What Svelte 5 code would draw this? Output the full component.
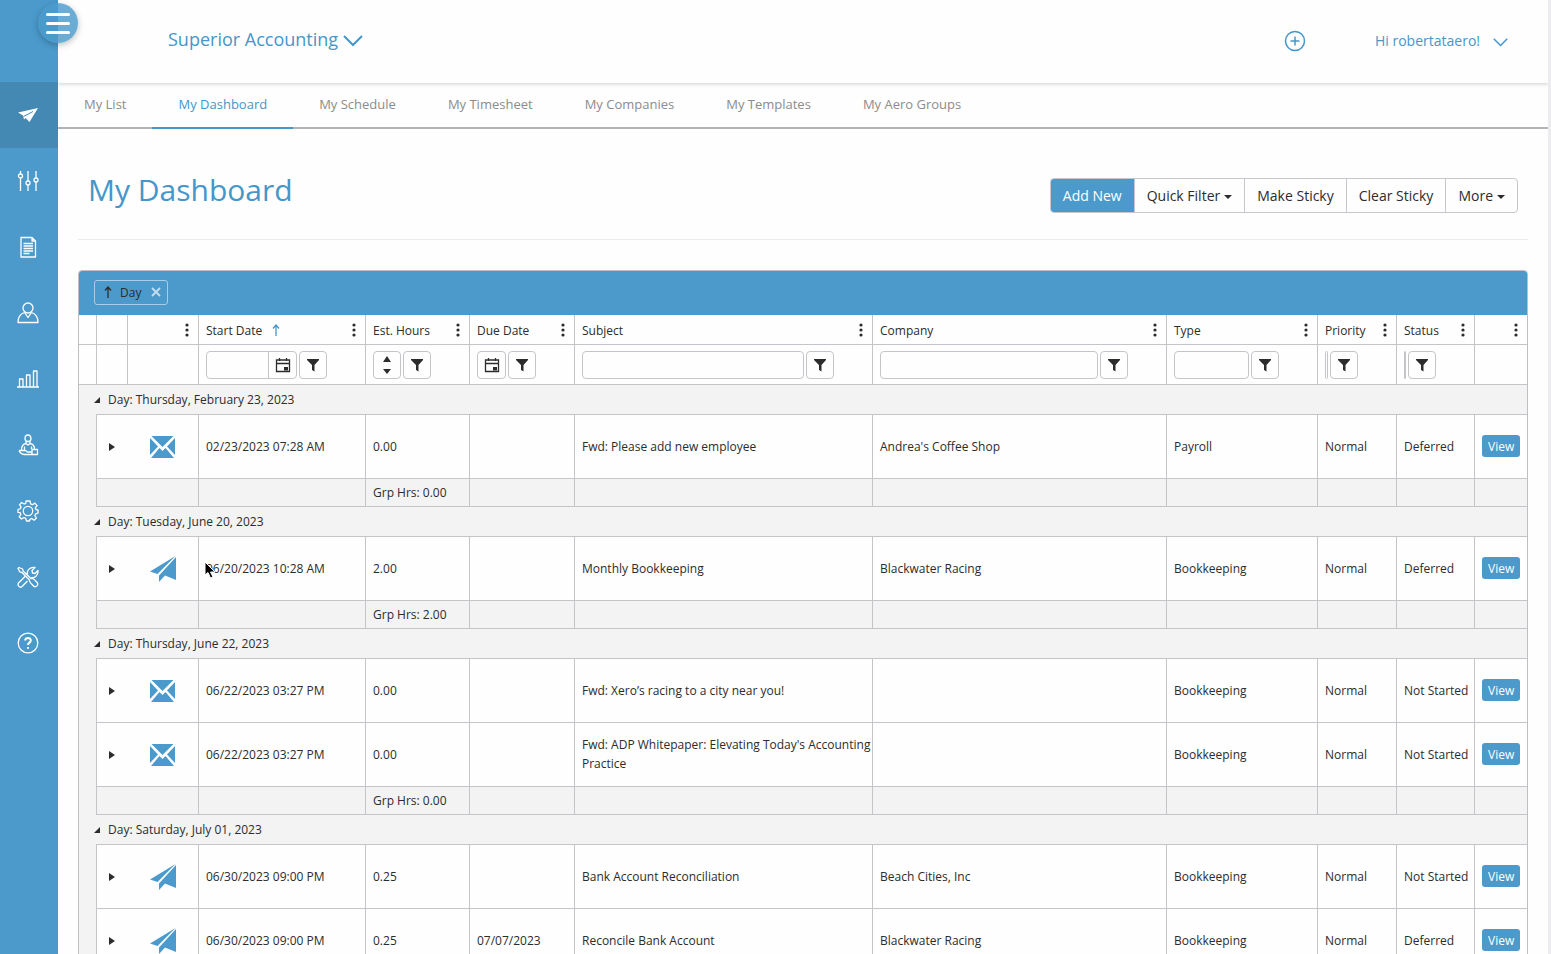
<script lang="ts">
  const navItems = ['send', 'sliders', 'document', 'user', 'chart', 'client', 'gear', 'tools', 'help'];
  const tabs = ['My List', 'My Dashboard', 'My Schedule', 'My Timesheet', 'My Companies', 'My Templates', 'My Aero Groups'];

  const columns = [
    { label: 'Start Date', filter: 'date', sorted: true },
    { label: 'Est. Hours', filter: 'number' },
    { label: 'Due Date', filter: 'date' },
    { label: 'Subject', filter: 'text' },
    { label: 'Company', filter: 'text' },
    { label: 'Type', filter: 'text' },
    { label: 'Priority', filter: 'text' },
    { label: 'Status', filter: 'text' }
  ];

  const groups = [
    {
      day: 'Thursday, February 23, 2023',
      hours: '0.00',
      rows: [
        { icon: 'mail', cells: ['02/23/2023 07:28 AM', '0.00', '', 'Fwd: Please add new employee', "Andrea's Coffee Shop", 'Payroll', 'Normal', 'Deferred'] }
      ]
    },
    {
      day: 'Tuesday, June 20, 2023',
      hours: '2.00',
      rows: [
        { icon: 'plane', pointer: true, cells: ['06/20/2023 10:28 AM', '2.00', '', 'Monthly Bookkeeping', 'Blackwater Racing', 'Bookkeeping', 'Normal', 'Deferred'] }
      ]
    },
    {
      day: 'Thursday, June 22, 2023',
      hours: '0.00',
      rows: [
        { icon: 'mail', cells: ['06/22/2023 03:27 PM', '0.00', '', 'Fwd: Xero’s racing to a city near you!', '', 'Bookkeeping', 'Normal', 'Not Started'] },
        { icon: 'mail', cells: ['06/22/2023 03:27 PM', '0.00', '', "Fwd: ADP Whitepaper: Elevating Today's Accounting Practice", '', 'Bookkeeping', 'Normal', 'Not Started'] }
      ]
    },
    {
      day: 'Saturday, July 01, 2023',
      rows: [
        { icon: 'plane', cells: ['06/30/2023 09:00 PM', '0.25', '', 'Bank Account Reconciliation', 'Beach Cities, Inc', 'Bookkeeping', 'Normal', 'Not Started'] },
        { icon: 'plane', cells: ['06/30/2023 09:00 PM', '0.25', '07/07/2023', 'Reconcile Bank Account', 'Blackwater Racing', 'Bookkeeping', 'Normal', 'Deferred'] }
      ]
    }
  ];

  let activeNav = $state('send');
  let activeTab = $state('My Dashboard');
</script>

{#snippet dots()}
  <button class="dots" aria-label="Column menu">
    <svg width="4" height="14" viewBox="0 0 4 14"><circle cx="2" cy="2" r="1.6" /><circle cx="2" cy="7" r="1.6" /><circle cx="2" cy="12" r="1.6" /></svg>
  </button>
{/snippet}

{#snippet chevron(size: number)}
  <svg class="chevron" width={size} height={size} viewBox="0 0 20 20"><path d="M1 5l9 9 9-9" /></svg>
{/snippet}

<div class="shell">
  <aside class="sidebar">
    <nav aria-label="Main">
      {#each navItems as item}
        <button class="nav-item" class:active={item === activeNav} aria-label={item} onclick={() => (activeNav = item)}>
          <svg width="22" height="22" viewBox="0 0 22 22">
            {#if item === 'send'}
              <path class="solid" d="M1 8.500 21 4l-8.500 14-4-4-1.500 1.500-1-4z" />
              <path class="fold" d="M6.500 12.500 16 7.500" />
            {:else if item === 'sliders'}
              <path d="M3.500 1v3M3.500 8v13M11 1v10M11 15v6M19 1v7M19 12v9" />
              <circle cx="3.500" cy="6" r="2" /><circle cx="11" cy="13" r="2" /><circle cx="19" cy="10" r="2" />
            {:else if item === 'document'}
              <path d="M4 1.500h11l3.500 3.500v16H4zM15 1.500V5h3.500M6.500 7.500h9.500M6.500 10h9.500M6.500 12.500h9.500M6.500 15h9.500M6.500 17.500h6" />
            {:else if item === 'user'}
              <circle cx="11" cy="6" r="5" />
              <path d="M7.500 10.500C3 12 1 14.500 1 20.500h20c0-6-2-8.500-6.500-10M7.500 10.500 11 15.500l3.500-5" />
            {:else if item === 'chart'}
              <path d="M0 19h22M2.500 19v-8h3.500v8M9.500 19V7h3.500v12M16.500 19V3h3.500v16" />
            {:else if item === 'client'}
              <path d="M8 4.500a3 3.500 0 0 1 6 0c0 4-6 4-6 0zM9 7.500v2l2 1.500 2-1.500v-2M9 9.500c-3 .5-4.500 2-4.500 6.500M13 9.500c3 .5 4.500 2 4.500 5.500M7.500 12.500V16M14.500 12.500V15M2 16.500h6.500l2 1.500h4.500M2 16.500c1 2.500 3 4 6 4h7M15 15.500h5.500v5H15z" />
            {:else if item === 'gear'}
              <circle cx="11" cy="11" r="4.700" />
              <path d="M9 1h4l.6 2.900 1.800.8 2.500-1.600 2.200 2.500-1.800 2.300.7 1.700 2 .4v3.200l-2.300.6-.8 1.800 1.500 2.400-2.300 2.200-2.400-1.700-1.700.8L12.500 21h-3l-.8-2.700-1.800-.8-2.400 1.500-2.300-2.200 1.600-2.500-.7-1.700L1 12.400V9.500l2.300-.8.800-1.800L2.500 4.700l2.200-2.200 2.500 1.500 1.600-.7z" />
            {:else if item === 'tools'}
              <path d="M2 1.500 5.500 3l.8 2.200L14 12.500c2-.5 3 .5 6.500 4.500 1 2-1.500 4.500-3.500 3.500-3.500-3.500-5-4.500-4.500-6.500L4.800 6.300 2.700 5.800 1 2.500zM10.500 8.500c-1-4 2.500-8 7.500-7l-3 3 .5 2.500 2.500.5 3-3c.5 5-3.500 8-7 7M8 10.500 1.500 17c-1.500 2 1 5 3 4l6-6" />
            {:else}
              <circle cx="11" cy="11" r="9.800" />
              <path class="bold" d="M8.200 8.500c0-3.500 5.600-3.500 5.600 0 0 2.200-2.800 2-2.800 4.500M11 15v1.800" />
            {/if}
          </svg>
        </button>
      {/each}
    </nav>
    <button class="menu-toggle" aria-label="Toggle menu"><span></span><span></span><span></span></button>
  </aside>

  <div class="page">
    <header>
      <button class="company">Superior Accounting {@render chevron(20)}</button>
      <div class="account">
        <button class="add" aria-label="Add">
          <svg width="22" height="22" viewBox="0 0 22 22"><circle cx="11" cy="11" r="9.500" /><path d="M6.500 11h9M11 6.500v9" /></svg>
        </button>
        <button class="user">Hi robertataero! {@render chevron(15)}</button>
      </div>
    </header>

    <nav class="tabs" aria-label="Sections">
      {#each tabs as tab}
        <a href="#{tab.replaceAll(' ', '-')}" class:active={tab === activeTab} onclick={() => (activeTab = tab)}>{tab}</a>
      {/each}
    </nav>

    <main>
      <div class="title-row">
        <h1>My Dashboard</h1>
        <div class="btn-group">
          <button class="primary">Add New</button>
          <button>Quick Filter<i class="caret"></i></button>
          <button>Make Sticky</button>
          <button>Clear Sticky</button>
          <button>More<i class="caret"></i></button>
        </div>
      </div>

      <div class="grid">
        <div class="grouping">
          <span class="chip">
            <svg width="8" height="12" viewBox="0 0 8 12"><path d="M4 12V1M1 4.500 4 1l3 3.500" /></svg>
            Day
            <button aria-label="Remove grouping">
              <svg width="10" height="10" viewBox="0 0 10 10"><path d="M1 1l8 8M9 1L1 9" /></svg>
            </button>
          </span>
        </div>
        <table>
          <colgroup>
            <col class="c-group" /><col class="c-expand" /><col class="c-icon" /><col class="c-start" />
            <col class="c-hours" /><col class="c-due" /><col class="c-subject" /><col /><col class="c-type" />
            <col class="c-priority" /><col class="c-status" /><col class="c-view" />
          </colgroup>
          <thead>
            <tr class="labels">
              <th></th>
              <th></th>
              <th><div class="th">{@render dots()}</div></th>
              {#each columns as column}
                <th>
                  <div class="th">
                    {column.label}
                    {#if column.sorted}
                      <svg class="sort" width="8" height="12" viewBox="0 0 8 12"><path d="M4 12V1M1 4.500 4 1l3 3.500" /></svg>
                    {/if}
                    {@render dots()}
                  </div>
                </th>
              {/each}
              <th><div class="th">{@render dots()}</div></th>
            </tr>
            <tr class="filters">
              <td></td>
              <td></td>
              <td></td>
              {#each columns as column}
                <td>
                  <div class="filter">
                    <div class="field">
                      <input type="text" aria-label="{column.label} filter" />
                      {#if column.filter === 'date'}
                        <button class="picker" aria-label="Pick {column.label}">
                          <svg width="16" height="16" viewBox="0 0 16 16"><path class="line" d="M1.500 3h13v11.500h-13zM1.500 6.500h13M4.500 1v3M11.500 1v3" /><path d="M9 10h4v3.500H9z" /></svg>
                        </button>
                      {:else if column.filter === 'number'}
                        <button class="picker" aria-label="Change {column.label}">
                          <svg width="8" height="20" viewBox="0 0 8 20"><path d="M4 1l4 6H0zM4 19l4-5H0z" /></svg>
                        </button>
                      {/if}
                    </div>
                    <button class="funnel" aria-label="{column.label} filter options">
                      <svg width="14" height="14" viewBox="0 0 14 14"><path d="M1 1h12v1L8.500 7v6.500L6 12V7L1 2z" /></svg>
                    </button>
                  </div>
                </td>
              {/each}
              <td></td>
            </tr>
          </thead>
          <tbody>
            {#each groups as group}
              <tr class="group">
                <td colspan="12">
                  <button aria-label="Collapse group"><svg width="6" height="6" viewBox="0 0 6 6"><path d="M6 0v6H0z" /></svg></button>Day: {group.day}
                </td>
              </tr>
              {#each group.rows as row}
                <tr class="item">
                  <td class="indent"></td>
                  <td class="expand">
                    <button aria-label="Expand row"><svg width="6" height="8" viewBox="0 0 6 8"><path d="M0 0l6 4-6 4z" /></svg></button>
                  </td>
                  <td class="kind">
                    {#if row.icon === 'mail'}
                      <svg width="25" height="22" viewBox="0 0 25 22"><path d="M1.500 0h22L17 6.500 12.500 11 8 6.500zM0 2l8 8.500L0 19zM25 2v17l-8-8.500zM1 22l8.500-10 3 3 3-3L24 22z" /></svg>
                    {:else}
                      <svg width="26" height="26" viewBox="0 0 26 26"><path d="M25.500 0 0 15.500l7.500 2.500zM26 1v23l-11-4.500L9 26v-6.500z" /></svg>
                    {/if}
                  </td>
                  {#each row.cells as cell, i}
                    <td>
                      {cell}
                      {#if row.pointer && i === 0}
                        <svg class="pointer" width="12" height="18" viewBox="0 0 12 18"><path d="M1 1v13l3-2.500L6.500 17 9 16l-2.500-5H11z" /></svg>
                      {/if}
                    </td>
                  {/each}
                  <td><button class="view">View</button></td>
                </tr>
              {/each}
              {#if group.hours}
                <tr class="total">
                  <td class="indent"></td>
                  <td></td>
                  <td class="kind"></td>
                  <td></td>
                  <td>Grp Hrs: {group.hours}</td>
                  <td></td><td></td><td></td><td></td><td></td><td></td><td></td>
                </tr>
              {/if}
            {/each}
          </tbody>
        </table>
      </div>
    </main>
  </div>
</div>

<style>
  :global(body) {
    margin: 0;
    background: #fefefe;
  }

  .shell {
    display: flex;
    height: 100vh;
    overflow: hidden;
    box-sizing: border-box;
    border-right: 3px solid #ececee;
    font-family: 'Open Sans', 'Noto Sans', sans-serif;
    font-size: 12px;
    color: #2c2c2c;
  }

  button {
    font: inherit;
    color: inherit;
    background: none;
    border: 0;
    padding: 0;
    cursor: pointer;
  }

  svg {
    display: block;
    fill: #2c2c2c;
  }

  /* Sidebar */
  .sidebar {
    position: relative;
    z-index: 2;
    flex: none;
    width: 58px;
    box-sizing: border-box;
    padding-top: 82px;
    background: #4b9acb;
  }

  .nav-item {
    display: flex;
    align-items: center;
    justify-content: center;
    width: 100%;
    height: 66px;
    padding-right: 2px;
  }

  .nav-item.active {
    background: #4489b3;
  }

  .nav-item path,
  .nav-item circle {
    fill: none;
    stroke: #fff;
    stroke-width: 1.3;
    stroke-linejoin: round;
  }

  .nav-item .solid {
    fill: #fff;
    stroke: none;
  }

  .nav-item .fold {
    stroke: #4489b3;
    stroke-width: 1;
  }

  .nav-item .bold {
    stroke-width: 2;
  }

  .menu-toggle {
    position: absolute;
    top: 3px;
    right: -20px;
    display: flex;
    flex-direction: column;
    align-items: center;
    justify-content: center;
    gap: 6px;
    width: 40px;
    height: 40px;
    border-radius: 50%;
    background: rgba(75, 154, 203, 0.82);
    box-shadow: 0 2px 6px rgba(0, 0, 0, 0.25);
  }

  .menu-toggle span {
    width: 24px;
    height: 3px;
    border-radius: 2px;
    background: #fff;
  }

  /* Header */
  .page {
    flex: 1;
    min-width: 0;
  }

  header {
    position: relative;
    display: flex;
    align-items: center;
    justify-content: space-between;
    height: 83px;
    box-sizing: border-box;
    padding: 0 40px 2px 110px;
    color: #4596ca;
    box-shadow: 0 1px 4px rgba(0, 0, 0, 0.2);
  }

  .company,
  .user,
  .account {
    display: flex;
    align-items: center;
  }

  .company {
    gap: 5px;
    margin-bottom: 3px;
    font-size: 18px;
  }

  .user {
    gap: 13px;
    font-size: 14px;
  }

  .account {
    gap: 69px;
  }

  .chevron {
    margin-top: 3px;
  }

  header path,
  header circle {
    fill: none;
    stroke: #4596ca;
    stroke-width: 2;
  }

  .add path,
  .add circle {
    stroke-width: 1.5;
  }

  .tabs {
    display: flex;
    height: 46px;
    box-sizing: border-box;
    border-bottom: 2px solid #b4b4b6;
  }

  .tabs a {
    margin-bottom: -2px;
    padding: 0 26px;
    border-bottom: 2px solid transparent;
    font-size: 13px;
    line-height: 42px;
    color: #8c8c8c;
    text-decoration: none;
  }

  .tabs a.active {
    color: #4596ca;
    border-color: #4596ca;
  }

  /* Content */
  main {
    padding: 0 20px;
  }

  .title-row {
    display: flex;
    align-items: center;
    justify-content: space-between;
    height: 111px;
    box-sizing: border-box;
    padding: 22px 10px 0;
    border-bottom: 1px solid #ececec;
    margin-bottom: 30px;
  }

  h1 {
    margin: 0 0 10px;
    font-size: 30px;
    font-weight: 400;
    line-height: 40px;
    color: #4596ca;
  }

  .btn-group {
    display: flex;
    height: 35px;
    box-sizing: border-box;
    border: 1px solid #c4c8cc;
    border-radius: 4px;
    overflow: hidden;
  }

  .btn-group button {
    display: flex;
    align-items: center;
    padding: 0 12px;
    font-size: 14px;
  }

  .btn-group button + button {
    border-left: 1px solid #c4c8cc;
  }

  .btn-group .primary {
    background: #4b9acb;
    color: #fff;
  }

  .caret {
    margin: 3px 0 0 4px;
    border: 4px solid transparent;
    border-top-color: #2c2c2c;
    border-bottom: 0;
  }

  .grid {
    border: 1px solid #bdbfc3;
    border-radius: 4px 4px 0 0;
    overflow: hidden;
  }

  .grouping {
    display: flex;
    align-items: center;
    height: 44px;
    box-sizing: border-box;
    padding: 0 0 2px 15px;
    background: #4b9acb;
  }

  .chip {
    display: flex;
    align-items: center;
    gap: 8px;
    height: 25px;
    box-sizing: border-box;
    padding: 0 6px 0 9px;
    border: 1px solid #a9cde5;
    border-radius: 3px;
  }

  .chip path,
  .sort path {
    fill: none;
    stroke: #2c2c2c;
    stroke-width: 1.3;
  }

  .chip button {
    margin-left: 2px;
  }

  .chip button path {
    stroke: #c0dcee;
    stroke-width: 2;
  }

  table {
    width: 100%;
    table-layout: fixed;
    border-collapse: separate;
    border-spacing: 0;
  }

  .c-group { width: 17px; }
  .c-expand { width: 31px; }
  .c-icon { width: 71px; }
  .c-start { width: 167px; }
  .c-hours { width: 104px; }
  .c-due { width: 105px; }
  .c-subject { width: 298px; }
  .c-type { width: 151px; }
  .c-priority { width: 79px; }
  .c-status { width: 78px; }
  .c-view { width: 53px; }

  th,
  td {
    box-sizing: border-box;
    padding: 0 0 0 7px;
    border-left: 1px solid #c3c5c9;
    font-weight: 400;
    text-align: left;
    line-height: 19px;
  }

  th:first-child,
  td:first-child {
    border-left: 0;
  }

  .labels th {
    height: 30px;
    padding-top: 1px;
    border-bottom: 1px solid #c3c5c9;
  }

  .th {
    display: flex;
    align-items: center;
  }

  .sort {
    margin-left: 10px;
  }

  .sort path {
    stroke: #4596ca;
  }

  .dots {
    margin: 0 9px 0 auto;
  }

  .filters td {
    height: 40px;
    border-bottom: 1px solid #c3c5c9;
  }

  .filter {
    display: flex;
    gap: 2px;
    margin-right: 38px;
  }

  .field,
  .funnel {
    height: 28px;
    box-sizing: border-box;
    border: 1px solid #c3c5c9;
    border-radius: 4px;
  }

  .field {
    display: flex;
    justify-content: flex-end;
    flex: 1;
    min-width: 0;
    overflow: hidden;
  }

  .field input {
    flex: 1;
    width: 0;
    min-width: 0;
    padding: 0;
    border: 0;
    background: none;
    font: inherit;
    outline: none;
  }

  .picker,
  .funnel {
    display: flex;
    flex: none;
    align-items: center;
    justify-content: center;
    width: 28px;
  }

  .picker {
    border-left: 1px solid #c3c5c9;
  }

  .line {
    fill: none;
    stroke: #2c2c2c;
    stroke-width: 1.3;
  }

  .group td,
  .total td,
  .indent {
    background: #f3f3f3;
  }

  .group td {
    height: 29px;
    padding-left: 15px;
  }

  .group button {
    display: inline-block;
    margin-right: 8px;
    vertical-align: 1px;
  }

  .item td {
    position: relative;
    height: 64px;
    padding-bottom: 1px;
    border-top: 1px solid #c3c5c9;
  }

  .total td {
    height: 29px;
    border-top: 1px solid #c3c5c9;
    border-bottom: 1px solid #c3c5c9;
  }

  .item .indent,
  .total .indent {
    border-top: 0;
    border-bottom: 0;
  }

  .item .kind,
  .total .kind {
    padding: 0 7px;
    border-left: 0;
  }

  .item .expand {
    padding: 0 0 0 12px;
  }

  .kind svg {
    margin: 0 auto;
    fill: #4b9acb;
  }

  .pointer {
    position: absolute;
    top: 24px;
    left: 5px;
    fill: #000;
    stroke: #fff;
    stroke-width: 1;
  }

  .view {
    height: 22px;
    padding: 0 6px;
    border-radius: 3px;
    background: #4b9acb;
    color: #fff;
  }
</style>
